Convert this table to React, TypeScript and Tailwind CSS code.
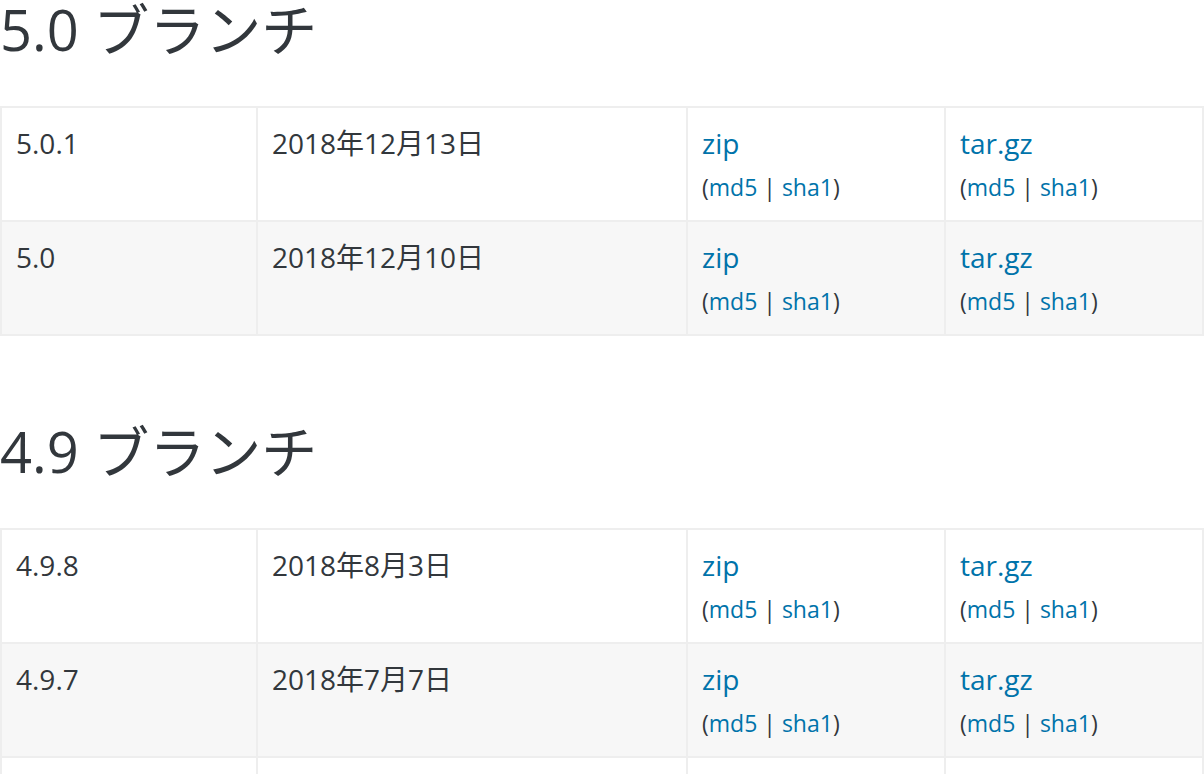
import React from "react";

type Row = { v: string; d: string };

const font = { fontFamily: '"Open Sans", "Noto Sans CJK JP", sans-serif' };

function Cell({ children, alt }: { children: React.ReactNode; alt: boolean }) {
  return (
    <div
      className={`h-[114px] overflow-hidden border-r-2 border-b-2 border-[#eeeeee] p-[14px] text-[28px] leading-[42px] text-[#32373c] ${
        alt ? "bg-[#f7f7f7]" : "bg-white"
      }`}
    >
      {children}
    </div>
  );
}

function Dl({ label, alt }: { label: string; alt: boolean }) {
  return (
    <Cell alt={alt}>
      <div className="h-[42px] leading-[42px]">
        <a className="text-[#0073aa]">{label}</a>
      </div>
      <div className="h-[42px] leading-[42px]">
        <span className="text-[23px] leading-none">
          (<a className="text-[#0073aa]">md5</a> | <a className="text-[#0073aa]">sha1</a>)
        </span>
      </div>
    </Cell>
  );
}

function Table({ rows }: { rows: Row[] }) {
  return (
    <div className="grid grid-cols-[256px_430px_258px_258px] border-l-2 border-t-2 border-[#eeeeee]">
      {rows.map((r, i) => {
        const alt = i % 2 === 1;
        return (
          <React.Fragment key={r.v}>
            <Cell alt={alt}>{r.v}</Cell>
            <Cell alt={alt}>{r.d}</Cell>
            <Dl label="zip" alt={alt} />
            <Dl label="tar.gz" alt={alt} />
          </React.Fragment>
        );
      })}
    </div>
  );
}

export default function App() {
  return (
    <div className="w-[1204px] h-[774px] overflow-hidden bg-white pt-[1px]" style={font}>
      <h2 className="text-[56px] leading-[56px] font-normal text-[#32373c] mb-[49px]">5.0 ブランチ</h2>
      <Table
        rows={[
          { v: "5.0.1", d: "2018年12月13日" },
          { v: "5.0", d: "2018年12月10日" },
        ]}
      />
      <h2 className="text-[56px] leading-[56px] font-normal text-[#32373c] mt-[87px] mb-[49px]">4.9 ブランチ</h2>
      <Table
        rows={[
          { v: "4.9.8", d: "2018年8月3日" },
          { v: "4.9.7", d: "2018年7月7日" },
          { v: "4.9.6", d: "2018年5月17日" },
        ]}
      />
    </div>
  );
}
